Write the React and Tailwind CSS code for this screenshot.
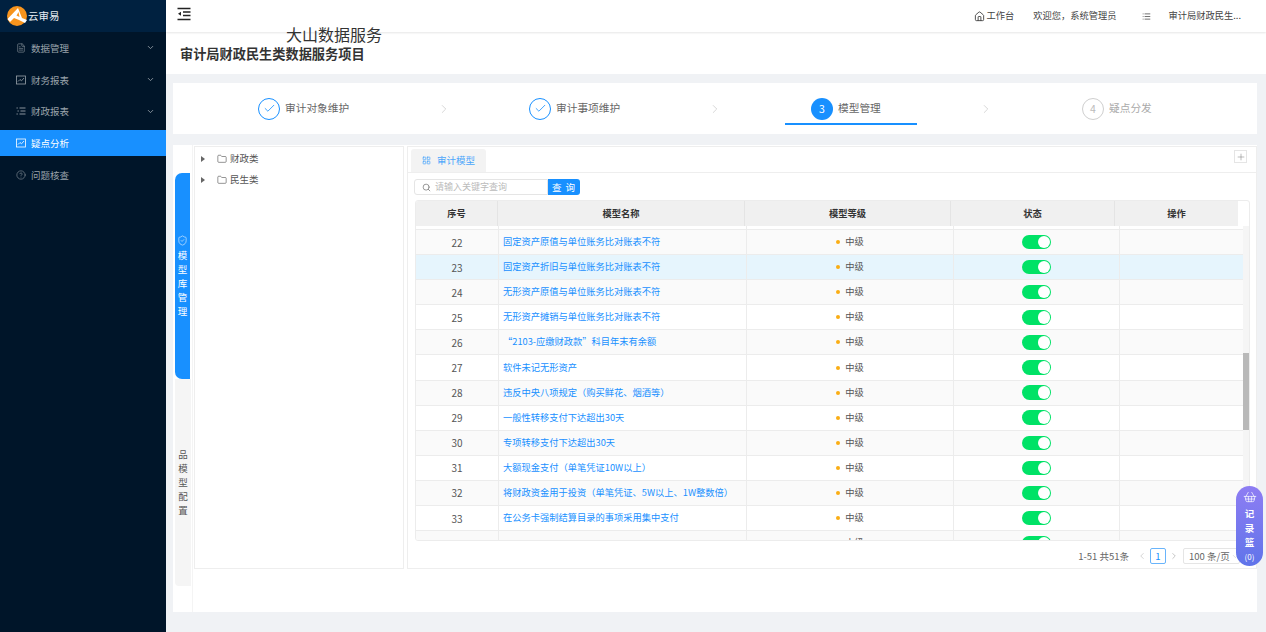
import { ChevronDown, ChevronRight, ChevronLeft, Check, Home, List, Search, Plus, Folder, LayoutGrid, FileText, HelpCircle, ShieldCheck, ShoppingBasket } from 'lucide-react';

const cjk = "font-['Noto_Sans_CJK_SC','Noto_Sans',sans-serif]";

const ChartBox = () => (
  <svg width="10" height="10" viewBox="0 0 10 10" fill="none" stroke="currentColor" strokeWidth="0.8">
    <rect x="0.5" y="1" width="9" height="8" />
    <path d="M2 6.5 L4 4.5 L5.5 5.8 L8 3" />
  </svg>
);

const ListLines = () => (
  <svg width="10" height="10" viewBox="0 0 10 10" fill="none" stroke="currentColor" strokeWidth="0.9">
    <path d="M0.5 2 H1.8 M3.5 2 H9.5 M1.5 5 H2.8 M4.5 5 H9.5 M0.5 8 H1.8 M3.5 8 H9.5" />
  </svg>
);

const menus = [
  { name: '数据管理', icon: FileText, arrow: true, h: 'h-[31.75px]' },
  { name: '财务报表', icon: ChartBox, arrow: true, h: 'h-[31.75px]' },
  { name: '财政报表', icon: ListLines, arrow: true, h: 'h-[31.75px]' },
  { name: '疑点分析', icon: ChartBox, active: true, h: 'h-[26px] my-[2.75px]' },
  { name: '问题核查', icon: HelpCircle, h: 'h-[31.75px]' },
];

const rows = [
  [22, '固定资产原值与单位账务比对账表不符'],
  [23, '固定资产折旧与单位账务比对账表不符'],
  [24, '无形资产原值与单位账务比对账表不符'],
  [25, '无形资产摊销与单位账务比对账表不符'],
  [26, '“2103-应缴财政款”科目年末有余额'],
  [27, '软件未记无形资产'],
  [28, '违反中央八项规定（购买鲜花、烟酒等）'],
  [29, '一般性转移支付下达超出30天'],
  [30, '专项转移支付下达超出30天'],
  [31, '大额现金支付（单笔凭证10W以上）'],
  [32, '将财政资金用于投资（单笔凭证、5W以上、1W整数倍）'],
  [33, '在公务卡强制结算目录的事项采用集中支付'],
  [34, ''],
];

const Step = ({ done, num, label, active, muted, width }) => (
  <div className={`relative flex items-center h-[51px] ${width}`}>
    {done && (
      <span className="w-[22px] h-[22px] rounded-full border border-[#1890ff] flex items-center justify-center">
        <Check size={13} strokeWidth={1.5} className="text-[#1890ff]" />
      </span>
    )}
    {active && <span className="ml-[26px] w-[22px] h-[22px] rounded-full bg-[#1890ff] text-white text-[10.5px] flex items-center justify-center">{num}</span>}
    {muted && <span className="w-[22px] h-[22px] rounded-full border border-[#cfcfcf] text-[#bbb] text-[10.5px] flex items-center justify-center">{num}</span>}
    <span className={`ml-[5px] text-[10.7px] ${muted ? 'text-[#aaa]' : 'text-[#666]'}`}>{label}</span>
    {active && <span className="absolute left-0 right-0 bottom-[9px] h-[2px] bg-[#1890ff]" />}
  </div>
);

const Row = ({ no, name, idx }) => (
  <div className={`flex h-[25.1px] shrink-0 border-b border-[#ececec] text-[9.25px] ${no === 23 ? 'bg-[#e6f5fd]' : idx % 2 === 0 ? 'bg-[#fafafa]' : 'bg-white'}`}>
    <div className="w-[83px] border-r border-[#ececec] flex items-center justify-center text-[#555] text-[10px]">{no}</div>
    <div className="w-[248px] border-r border-[#ececec] flex items-center pl-[4px] text-[#1890ff] whitespace-nowrap overflow-hidden">{name}</div>
    <div className="w-[207px] border-r border-[#ececec] flex items-center justify-center text-[#555]">
      <span className="w-[4px] h-[4px] rounded-full bg-[#faad14] mr-[5px]" />中级
    </div>
    <div className="w-[166px] border-r border-[#ececec] flex items-center justify-center">
      <span className="w-[29px] h-[14.5px] rounded-full bg-[#00e266] flex justify-end items-center pr-[1px]">
        <span className="w-[12.5px] h-[12.5px] rounded-full bg-white" />
      </span>
    </div>
    <div className="flex-1" />
  </div>
);

export default function App() {
  return (
    <div className={`flex w-[1266px] h-[632px] overflow-hidden bg-[#f0f2f5] ${cjk}`}>
      <aside className="w-[166px] shrink-0 bg-[#001529] text-[#9aa3ab]">
        <div className="h-[32px] bg-[#002140] flex items-center pl-[6px]">
          <svg width="22" height="22" viewBox="0 0 22 22">
            <circle cx="11" cy="11" r="10" fill="#f7941d" />
            <path d="M1.5 14 L12 3 L16 13 L21 15 L19 18 L13 15 L8 13 L4 17 Z" fill="#fff" />
            <path d="M10.5 10.5 L12.5 7 L13.5 12 Z" fill="#f7941d" />
          </svg>
          <span className="text-[10.5px] text-[#e8edf2]">云审易</span>
        </div>
        <nav>
          {menus.map((m) => (
            <div key={m.name} className={`flex items-center pl-[16px] pr-[11px] ${m.h} ${m.active ? 'bg-[#1890ff] text-white' : ''}`}>
              <m.icon size={10} strokeWidth={1.3} />
              <span className="ml-[5px] text-[9.5px] flex-1">{m.name}</span>
              {m.arrow && <ChevronDown size={9} strokeWidth={2.2} />}
            </div>
          ))}
        </nav>
      </aside>

      <div className="flex-1 min-w-0 flex flex-col relative">
        <header className="h-[32px] bg-white shadow-[0_1px_2px_rgba(0,0,0,0.1)] flex items-center pl-[11px] pr-[25px] text-[9.25px] text-[#444] z-10">
          <svg width="14" height="14" viewBox="0 0 14 14" fill="none" stroke="#222" strokeWidth="1.3" className="-mt-[4px]">
            <path d="M0.5 1.5 H13.5 M6 5 H13.5 M6 8.5 H13.5 M0.5 12.5 H13.5" />
            <path d="M4 4.8 L1 6.8 L4 8.8 Z" fill="#222" stroke="none" />
          </svg>
          <div className="flex-1" />
          <Home size={11} className="mr-[2px]" />
          <span>工作台</span>
          <span className="ml-[19px]">欢迎您，系统管理员</span>
          <List size={9} className="ml-[25px]" />
          <span className="ml-[18px]">审计局财政民生...</span>
        </header>
        <span className="absolute left-[120px] top-[24px] text-[16px] leading-[20px] text-[#333] z-20">大山数据服务</span>
        <div className="h-[42px] bg-white flex items-center pl-[14px] pt-[2px] text-[13.2px] leading-[18px] font-bold text-[#333]">审计局财政民生类数据服务项目</div>

        <main className="flex-1 min-h-0 pl-[7px] pr-[9px] pt-[9px] pb-[20px] flex flex-col gap-[11px]">
          <div className="h-[51px] shrink-0 bg-white flex items-center pl-[85px]">
            <Step done label="审计对象维护" width="w-[179px]" />
            <ChevronRight size={14} strokeWidth={1} className="text-[#bbb]" />
            <Step done label="审计事项维护" width="w-[179px] ml-[78px]" />
            <ChevronRight size={14} strokeWidth={1} className="text-[#bbb]" />
            <Step active num="3" label="模型管理" width="w-[132px] ml-[63px]" />
            <ChevronRight size={14} strokeWidth={1} className="text-[#bbb] ml-[62px]" />
            <Step muted num="4" label="疑点分发" width="w-[82px] ml-[89px]" />
          </div>

          <div className="flex-1 min-h-0 bg-white flex items-start relative">
            <div className="w-[20px] pl-[2px] shrink-0 h-full border-r border-[#f4f4f4]">
              <div className="w-[16px] mt-[28px] h-[413px] flex flex-col">
                <div className="h-[206px] w-[15px] bg-[#1890ff] rounded-l-[7px] text-white flex flex-col items-center justify-center text-[9.5px] leading-[14px]">
                  <ShieldCheck size={11} strokeWidth={1.2} className="mb-[2px]" />
                  {['模', '型', '库', '管', '理'].map((c) => <span key={c}>{c}</span>)}
                </div>
                <div className="flex-1 bg-[#f5f5f5] rounded-bl-[4px] text-[#555] flex flex-col items-center pt-[68px] text-[9.5px] leading-[14px]">
                  {['品', '模', '型', '配', '置'].map((c) => <span key={c}>{c}</span>)}
                </div>
              </div>
            </div>

            <div className="w-[210px] ml-[1px] mt-[1px] h-[423px] border border-[#eeeeee] pt-[1px] text-[9.5px] text-[#555] shrink-0">
              {['财政类', '民生类'].map((t) => (
                <div key={t} className="h-[21px] flex items-center pl-[6px]">
                  <span className="w-0 h-0 border-y-[3px] border-y-transparent border-l-[4px] border-l-[#666]" />
                  <Folder size={10} strokeWidth={1.5} className="ml-[12px] mr-[3px]" />{t}
                </div>
              ))}
            </div>

            <section className="flex-1 min-w-0 ml-[3px] mt-[1px] h-[423px] border border-[#eeeeee] flex flex-col">
              <div className="h-[26px] shrink-0 border-b border-[#eeeeee] flex items-end pl-[3px] relative">
                <div className="w-[75px] h-[23px] bg-[#f3f3f3] rounded-t-[3px] flex items-center justify-center text-[9.5px] text-[#4ba6fb]">
                  <LayoutGrid size={9} className="mr-[6px]" />审计模型
                </div>
                <span className="absolute right-[9px] top-[3px] w-[13px] h-[13px] border border-[#e5e5e5] flex items-center justify-center text-[#777]"><Plus size={10} strokeWidth={1.2} /></span>
              </div>

              <div className="flex ml-[6px] mt-[6px] h-[16px] shrink-0">
                <div className="w-[134px] border border-[#e5e5e5] rounded-l-[3px] flex items-center pl-[7px] text-[9px] text-[#bbb]">
                  <Search size={9} className="text-[#777] mr-[4px]" />请输入关键字查询
                </div>
                <button className="w-[32px] bg-[#1890ff] rounded-r-[3px] text-white text-[9.5px] tracking-[1px]">查 询</button>
              </div>

              <div className="ml-[7px] mt-[5px] w-[835px] h-[341px] relative border border-[#ececec] rounded-[3px] overflow-hidden flex flex-col shrink-0">
                <div className="h-[25px] shrink-0 w-[822px] bg-[#f0f0f0] flex text-[9.25px] font-bold text-[#333]">
                  <div className="w-[82px] border-r border-[#e4e4e4] flex items-center justify-center">序号</div>
                  <div className="w-[247px] border-r border-[#e4e4e4] flex items-center justify-center">模型名称</div>
                  <div className="w-[206px] border-r border-[#e4e4e4] flex items-center justify-center">模型等级</div>
                  <div className="w-[164px] border-r border-[#e4e4e4] flex items-center justify-center">状态</div>
                  <div className="flex-1 flex items-center justify-center">操作</div>
                </div>
                <div className="flex-1 min-h-0 w-[829px] overflow-hidden">
                  <div className="h-[4px] border-b border-[#ececec] flex">
                    <div className="w-[83px] border-r border-[#ececec]" />
                    <div className="w-[248px] border-r border-[#ececec]" />
                    <div className="w-[207px] border-r border-[#ececec]" />
                    <div className="w-[166px] border-r border-[#ececec]" />
                  </div>
                  {rows.map((r, i) => <Row key={r[0]} no={r[0]} name={r[1]} idx={i} />)}
                </div>
                <div className="absolute right-0 top-[25px] bottom-0 w-[6px] bg-[#f5f5f5]">
                  <div className="absolute left-0 right-0 top-[127px] h-[77px] bg-[#b9b9b9]" />
                </div>
              </div>

              <div className="flex items-center justify-end pr-[16px] mt-[7px] text-[9.5px] text-[#666]">
                <span>1-51 共51条</span>
                <ChevronLeft size={10} className="ml-[8px] text-[#ccc]" />
                <span className="ml-[3px] w-[16px] h-[16px] border border-[#69b4fb] rounded-[2px] text-[#1890ff] flex items-center justify-center">1</span>
                <ChevronRight size={10} className="ml-[3px] text-[#bbb]" />
                <span className="ml-[4px] w-[57px] h-[16px] border border-[#e5e5e5] rounded-[2px] flex items-center pl-[5px] whitespace-nowrap overflow-hidden">
                  100 条/页
                  <ChevronDown size={9} strokeWidth={1.2} className="shrink-0 ml-[1px] text-[#bbb]" />
                </span>
              </div>
            </section>
          </div>
        </main>

        <div className="absolute right-[3px] top-[486px] w-[27px] h-[80px] rounded-full bg-gradient-to-b from-[#8e7df3] to-[#5f74ea] text-white flex flex-col items-center pt-[4px] text-[9.5px] font-bold leading-[14.5px] z-30">
          <ShoppingBasket size={14} strokeWidth={1.2} className="mb-[2px]" />
          <span>记</span><span>录</span><span>篮</span>
          <span className="text-[8px] font-normal leading-[14px]">(0)</span>
        </div>
      </div>
    </div>
  );
}
